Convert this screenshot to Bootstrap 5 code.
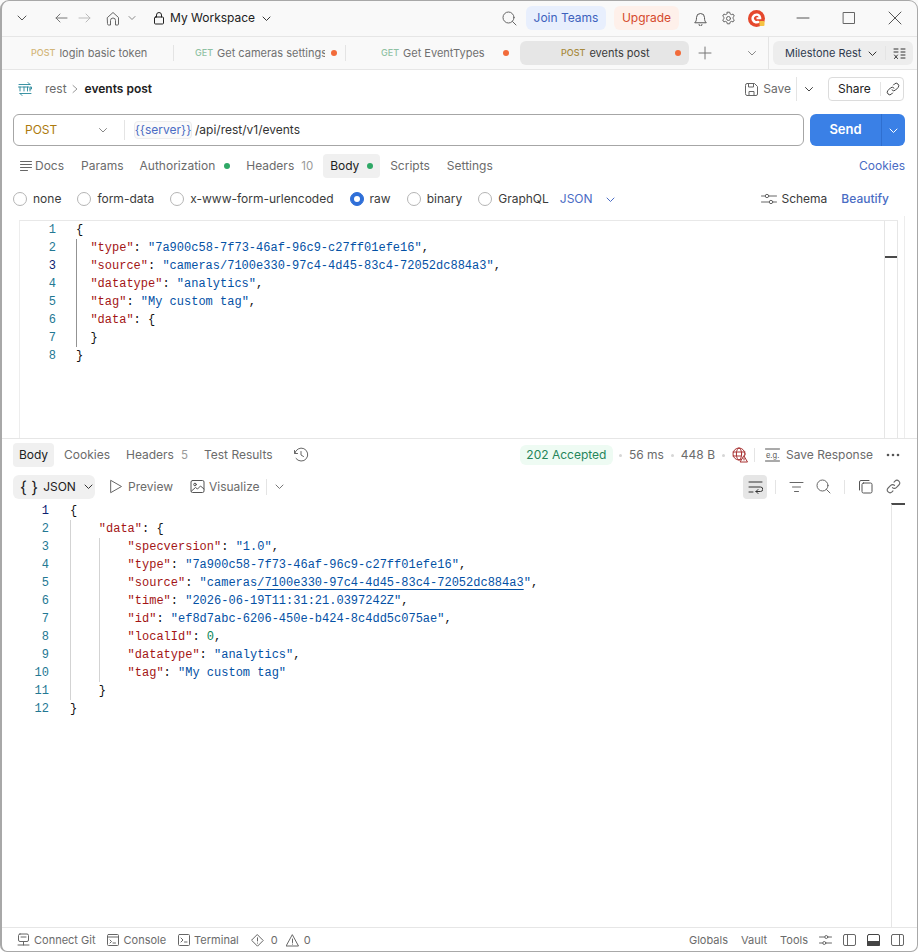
<!DOCTYPE html>
<html lang="en">
<head>
  <meta charset="UTF-8" />
  <meta name="viewport" content="width=device-width, initial-scale=1" />
  <title>events post</title>
  <link href="https://cdn.jsdelivr.net/npm/bootstrap@5.3.3/dist/css/bootstrap.min.css" rel="stylesheet" />
  <style>
    html, body { margin: 0; background: #fff; }
    body { font-family: Inter, "Liberation Sans", sans-serif; font-size: 12px; color: #6b6b6b; line-height: 16px; }
    svg { flex: none; display: block; fill: none; stroke: currentColor; stroke-width: 1; stroke-linecap: round; stroke-linejoin: round; }
    .app { position: relative; width: 918px; height: 952px; overflow: hidden; display: flex; flex-direction: column; background: #fff; }
    .app::after { content: ""; position: absolute; inset: 0; border: 1px solid #a8a8a8; border-left-width: 2px; border-radius: 9px 9px 7px 7px; pointer-events: none; }

    .titlebar { height: 37px; flex: none; background: #f9f9f9; border-bottom: 1px solid #e6e6e6; padding-left: 15px; padding-right: 16px; }
    .wsname { color: #212121; font-size: 12px; }
    .pill-join, .pill-up { height: 24px; border-radius: 6px; display: flex; align-items: center; justify-content: center; font-size: 12px; }
    .pill-join { width: 80px; background: #e8effd; color: #3d62bd; }
    .pill-up { width: 65px; background: #fef0ea; color: #d5492c; }

    .tabbar { height: 33px; flex: none; background: #f9f9f9; border-bottom: 1px solid #e6e6e6; }
    .rtab { height: 24px; display: flex; align-items: center; color: #707070; font-size: 11px; white-space: nowrap; position: relative; }
    .rtab b { font-weight: 500; font-size: 9px; margin-right: 4px; }
    .m-post { color: #d3b678; }
    .m-get { color: #8fc1a3; }
    .tw1 { width: 174px; padding-left: 31px; }
    .tw2 { width: 172px; padding-left: 21px; }
    .tw3 { width: 174px; padding-left: 35px; }
    .tw4 { width: 169px; padding-left: 41px; background: #e6e6e6; border-radius: 6px; color: #3b3b3b; }
    .tw4 b { color: #a88a3c; }
    .tsep::after { content: ""; position: absolute; right: 0; top: 4px; bottom: 4px; width: 1px; background: #e4e4e4; }
    .clip-t { width: 108px; overflow: hidden; }
    .tdot { width: 6px; height: 6px; border-radius: 50%; background: #f26b3a; flex: none; }
    .envbox { width: 140px; height: 24px; background: #ededed; border-radius: 6px; color: #2f3a4d; padding-left: 12px; font-size: 11px; }
    .vsep { width: 1px; background: #e4e4e4; flex: none; }

    .crumb { height: 38px; flex: none; padding-left: 17px; padding-right: 14px; }
    .crumb-name { color: #212121; font-weight: 600; font-size: 12px; }
    .sharebtn { width: 76px; height: 24px; padding: 0 0 0 9px; border: 1px solid #dcdcdc; border-radius: 4px; color: #212121; font-size: 12px; display: flex; align-items: center; background: #fff; }

    .urlrow { height: 38px; flex: none; padding-left: 13px; padding-right: 13px; padding-top: 6px; }
    .urlbox { width: 791px; height: 32px; border: 1px solid #a6a6a6; border-radius: 6px; }
    .meth { width: 73px; color: #ad7a0d; font-size: 12px; margin-left: 11px; }
    .srv { width: 58px; height: 18px; border: 1px solid #ededed; border-radius: 4px; background: #fafafa; color: #4a6cc4; font-size: 12px; display: flex; align-items: center; justify-content: center; }
    .urltxt { color: #333; font-size: 12px; margin-left: 3px; }
    .sendgrp { width: 95px; height: 32px; margin-left: 6px; }
    .sendgrp .btn { background: #3a80e6; border: 0; color: #fff; height: 32px; padding: 0; }
    .sendmain { width: 71px; font-weight: 600; font-size: 13px; border-radius: 6px 0 0 6px !important; }
    .sendarr { width: 24px; border-left: 1px solid #2f6fd0 !important; border-radius: 0 6px 6px 0 !important; display: flex; align-items: center; justify-content: center; margin-left: 0 !important; }

    .reqtabs { height: 36px; flex: none; padding-top: 4px; padding-left: 20px; padding-right: 13px; font-size: 12px; }
    .cnt { color: #9a9a9a; font-size: 11.5px; }
    .gdot { width: 6px; height: 6px; border-radius: 50%; background: #2fa866; flex: none; }
    .body-on { width: 57px; height: 24px; background: #f0f0f0; border-radius: 4px; padding-left: 7px; color: #212121; }
    .linkc { color: #4a6cc4; }

    .bodyopts { height: 34px; flex: none; padding-left: 13px; padding-right: 29px; font-size: 12px; color: #3b3b3b; }
    .form-check-input.rad { width: 14px; height: 14px; margin-top: 0; margin-right: 6px; border: 1px solid #b5b5b5; flex: none; }
    .form-check-input.rad:checked { background-color: #2f6fd8; border-color: #2f6fd8; }

    .editorwrap { height: 222px; flex: none; width: 905px; border-right: 1px solid #ededed; padding-top: 4px; padding-left: 19px; }
    .editor { width: 879px; height: 218px; border-top: 1px solid #e8e8e8; border-left: 1px solid #ededed; }
    .miniL { width: 14px; flex: none; border-left: 1px solid #e6e6e6; border-right: 1px solid #e6e6e6; padding-top: 35px; }
    .miniL i { display: block; height: 2px; background: #4a4a4a; }
    .mono { font-family: "Liberation Mono", "DejaVu Sans Mono", monospace; font-size: 12px; line-height: 18px; color: #111; }
    .ln { height: 18px; display: flex; white-space: pre; }
    .num { text-align: right; color: #237893; flex: none; }
    .ed-n { width: 36px; margin-right: 20px; }
    .re-n { width: 49px; margin-right: 21px; }
    .num.on { color: #0b216f; }
    .gd { width: 14.4px; flex: none; border-left: 1px solid #d3d3d3; }
    .gd.act { border-left-color: #939393; }
    .gd2 { width: 28.8px; }
    .k { color: #a31515; }
    .s { color: #0451a5; }
    .n { color: #098658; }
    .lk { text-decoration: underline; text-underline-offset: 3px; }

    .paneline { height: 1px; flex: none; background: #e6e6e6; }
    .restabs { height: 32px; flex: none; padding-left: 13px; padding-right: 18px; font-size: 12px; }
    .body-r { width: 41px; height: 24px; background: #f0f0f0; border-radius: 4px; color: #212121; display: flex; align-items: center; justify-content: center; }
    .acc { width: 93px; height: 20px; background: #eefbf3; color: #25855a; border-radius: 6px; display: flex; align-items: center; justify-content: center; font-size: 12px; }
    .sdot { width: 3px; height: 3px; border-radius: 50%; background: #d6d6d6; flex: none; }
    .restools { height: 31px; flex: none; padding-left: 13px; padding-right: 17px; font-size: 12px; }
    .jsonbox { width: 82px; height: 24px; background: #f0f0f0; border-radius: 6px; color: #212121; padding-left: 7px; }
    .wrapbtn { width: 24px; height: 24px; background: #e6e6e6; border-radius: 4px; display: flex; align-items: center; justify-content: center; color: #333; }
    .rescode { flex: 1 1 auto; min-height: 0; }
    .miniR { width: 14px; flex: none; margin-left: auto; margin-right: 13px; border-left: 1px solid #e6e6e6; border-top: 2px solid #4a4a4a; margin-top: 1px; }

    .statusbar { height: 25px; flex: none; border-top: 1px solid #e6e6e6; padding-left: 17px; padding-right: 14px; font-size: 11px; }
    .sm1 { margin-left: 1px; } .sm2 { margin-left: 2px; } .sm3 { margin-left: 3px; } .sm4 { margin-left: 4px; } .sm5 { margin-left: 5px; } .sm6 { margin-left: 6px; }
    .sm7 { margin-left: 7px; } .sm8 { margin-left: 8px; } .sm9 { margin-left: 9px; } .sm10 { margin-left: 10px; } .sm11 { margin-left: 11px; } .sm12 { margin-left: 12px; }
    .sm13 { margin-left: 13px; } .sm14 { margin-left: 14px; } .sm15 { margin-left: 15px; } .sm16 { margin-left: 16px; } .sm17 { margin-left: 17px; } .sm18 { margin-left: 18px; } .sm20 { margin-left: 20px; } .sm25 { margin-left: 25px; } .sm26 { margin-left: 26px; } .sm31 { margin-left: 31px; } .sm32 { margin-left: 32px; } .sm35 { margin-left: 35px; }
    .h14 { height: 14px; }
    .h16 { height: 16px; }
    .h20 { height: 20px; }
    .h24 { height: 24px; }
    .logo { stroke: none; }
  </style>
</head>
<body>
<div class="app">

  <!-- title bar -->
  <div class="titlebar d-flex align-items-center">
    <svg class="sm1" width="12" height="12" viewBox="0 0 12 12" color="#555"><path d="M2 4l4 4 4-4"/></svg>
    <svg class="sm26" width="14" height="14" viewBox="0 0 14 14" color="#777"><path d="M13 7H2M6 3L2 7l4 4"/></svg>
    <svg class="sm10" width="14" height="14" viewBox="0 0 14 14" color="#bbb"><path d="M1 7h11M8 3l4 4-4 4"/></svg>
    <svg class="sm14" width="14" height="15" viewBox="0 0 14 15" color="#666"><path d="M1.500 6.500L7 1.500l5.500 5V13a1 1 0 0 1-1 1H9.500V9.500a2.500 2.500 0 0 0-5 0V14H2.500a1 1 0 0 1-1-1z"/></svg>
    <svg class="sm8" width="8" height="8" viewBox="0 0 8 8" color="#888"><path d="M1 2.500l3 3 3-3"/></svg>
    <svg class="sm17" width="12" height="14" viewBox="0 0 12 14" color="#222"><rect x="1.500" y="6" width="9" height="7" rx="1"/><path d="M3.500 6V4a2.500 2.500 0 0 1 5 0v2"/></svg>
    <span class="wsname sm5">My Workspace</span>
    <svg class="sm7" width="9" height="9" viewBox="0 0 9 9" color="#333"><path d="M1 3l3.500 3.500L8 3"/></svg>
    <svg class="ms-auto" width="15" height="15" viewBox="0 0 15 15" color="#666"><circle cx="6.500" cy="6.500" r="5.500"/><path d="M10.500 10.500L14 14"/></svg>
    <div class="pill-join sm9">Join Teams</div>
    <div class="pill-up sm8">Upgrade</div>
    <svg class="sm14" width="15" height="15" viewBox="0 0 15 15" color="#555"><path d="M2 11.500c1-1 1.500-2 1.500-5a4 4 0 0 1 8 0c0 3 .5 4 1.500 5zM6 13.500a1.500 1.500 0 0 0 3 0"/></svg>
    <svg class="sm13" width="15" height="15" viewBox="0 0 15 15" color="#666"><path d="M6.300 1.200h2.400l.4 1.700 1.300.7 1.700-.5 1.200 2-1.300 1.200v1.400l1.300 1.200-1.200 2-1.700-.5-1.300.7-.4 1.700H6.300l-.4-1.700-1.300-.7-1.700.5-1.200-2 1.300-1.200V6.300L1.700 5.100l1.200-2 1.700.5 1.300-.7z"/><circle cx="7.500" cy="7.500" r="2"/></svg>
    <svg class="logo sm12" width="17" height="17" viewBox="0 0 17 17"><circle cx="8.500" cy="8.500" r="8.500" fill="#e5482d"/><path d="M8.500 3.500a5 5 0 1 0 3.500 8.500l-2-1.500a2.500 2.500 0 1 1 .7-3.300h-2.200v2h4.800c.4-3.400-1.800-5.700-4.800-5.700z" fill="#fff"/><rect x="11.500" y="11" width="5" height="5" rx="1" fill="#f6c343"/></svg>
    <svg class="sm31" width="14" height="14" viewBox="0 0 14 14" color="#555"><path d="M1 7h12"/></svg>
    <svg class="sm32" width="14" height="14" viewBox="0 0 14 14" color="#666" stroke-width="1.500"><rect x="1.500" y="1.500" width="11" height="11"/></svg>
    <svg class="sm32" width="14" height="14" viewBox="0 0 14 14" color="#555"><path d="M1 1l12 12M13 1L1 13"/></svg>
  </div>

  <!-- open requests -->
  <div class="tabbar d-flex align-items-center">
    <div class="rtab tw1 tsep"><b class="m-post">POST</b>login basic token</div>
    <div class="rtab tw2 tsep"><b class="m-get">GET</b><span class="clip-t">Get cameras settings</span><span class="tdot sm6"></span></div>
    <div class="rtab tw3"><b class="m-get">GET</b>Get EventTypes<span class="tdot sm18"></span></div>
    <div class="rtab tw4"><b>POST</b>events post<span class="tdot sm25"></span></div>
    <svg class="sm9" width="14" height="14" viewBox="0 0 14 14" color="#777"><path d="M7 1v12M1 7h12"/></svg>
    <svg class="sm35" width="10" height="10" viewBox="0 0 10 10" color="#888"><path d="M1.500 3.500L5 7l3.500-3.500"/></svg>
    <div class="vsep sm11 align-self-stretch"></div>
    <div class="envbox sm4 d-flex align-items-center">
      <span>Milestone Rest</span>
      <svg class="sm7" width="9" height="9" viewBox="0 0 9 9" color="#333"><path d="M1 3l3.500 3.500L8 3"/></svg>
      <div class="vsep sm8 h14"></div>
      <svg class="sm7" width="13" height="13" viewBox="0 0 13 13" color="#333"><path d="M1 2h4M1 5h4M8 2h4M8 5h4M8 8h4M8 11h4M1.500 8l3 3.500M4.500 8l-3 3.500"/></svg>
    </div>
  </div>

  <!-- breadcrumb -->
  <div class="crumb d-flex align-items-center">
    <svg width="16" height="16" viewBox="0 0 16 16" color="#26879a"><path d="M2 3.500h11M11 1.500l2 2M14 12.500H3M5 14.500l-2-2M1.500 6h3M3 6v4M5.500 6h3M7 6v4M9 6h3M10.500 6v4M13 10V6h1.500v2H13" stroke-width=".9"/></svg>
    <span class="sm12">rest</span>
    <svg class="sm4" width="8" height="10" viewBox="0 0 8 10" color="#999"><path d="M2 1.500L6 5 2 8.500"/></svg>
    <span class="crumb-name sm6">events post</span>
    <svg class="ms-auto" width="15" height="15" viewBox="0 0 15 15" color="#666"><path d="M1.500 3a1.500 1.500 0 0 1 1.500-1.500h7.500l3 3V12a1.500 1.500 0 0 1-1.500 1.500H3A1.500 1.500 0 0 1 1.500 12zM4.500 1.500V5h5V1.500M5 13.500V9.500h5v4"/></svg>
    <span class="sm4">Save</span>
    <div class="vsep sm5 h24"></div>
    <svg class="sm7" width="10" height="10" viewBox="0 0 10 10" color="#444"><path d="M1.500 3.500L5 7l3.500-3.500"/></svg>
    <button class="sharebtn sm14">Share
      <span class="vsep sm9 h14"></span>
      <svg class="sm5" width="14" height="14" viewBox="0 0 14 14" color="#444"><path d="M6 8a2.500 2.500 0 0 0 3.600 0l2.400-2.400A2.500 2.500 0 0 0 8.400 2L7.500 3M8 6a2.500 2.500 0 0 0-3.600 0L2 8.400A2.500 2.500 0 0 0 5.600 12l.9-1"/></svg>
    </button>
  </div>

  <!-- url -->
  <div class="urlrow d-flex">
    <div class="urlbox d-flex align-items-center">
      <span class="meth">POST</span>
      <svg width="10" height="10" viewBox="0 0 10 10" color="#888"><path d="M1.500 3.500L5 7l3.500-3.500"/></svg>
      <div class="vsep sm16 h20"></div>
      <div class="srv sm9">{{server}}</div>
      <span class="urltxt">/api/rest/v1/events</span>
    </div>
    <div class="btn-group sendgrp">
      <button class="btn sendmain">Send</button>
      <button class="btn sendarr"><svg width="9" height="9" viewBox="0 0 9 9" color="#fff"><path d="M1 3l3.500 3.500L8 3"/></svg></button>
    </div>
  </div>

  <!-- request tabs -->
  <div class="reqtabs d-flex align-items-center">
    <svg width="14" height="12" viewBox="0 0 14 12" color="#666"><path d="M0.500 1.500h11M0.500 4.500h11M0.500 7.500h11M0.500 10.500h7"/></svg>
    <span class="sm1">Docs</span>
    <span class="sm17">Params</span>
    <span class="sm16">Authorization</span>
    <span class="gdot sm9"></span>
    <span class="sm16">Headers</span>
    <span class="cnt sm7">10</span>
    <div class="body-on sm10 d-flex align-items-center"><span>Body</span><span class="gdot sm8"></span></div>
    <span class="sm10">Scripts</span>
    <span class="sm17">Settings</span>
    <span class="linkc ms-auto">Cookies</span>
  </div>

  <!-- body type -->
  <div class="bodyopts d-flex align-items-center">
    <input class="form-check-input rad" type="radio" name="bt"><span>none</span>
    <input class="form-check-input rad sm16" type="radio" name="bt"><span>form-data</span>
    <input class="form-check-input rad sm16" type="radio" name="bt"><span>x-www-form-urlencoded</span>
    <input class="form-check-input rad sm16" type="radio" name="bt" checked><span>raw</span>
    <input class="form-check-input rad sm16" type="radio" name="bt"><span>binary</span>
    <input class="form-check-input rad sm16" type="radio" name="bt"><span>GraphQL</span>
    <span class="linkc sm11">JSON</span>
    <svg class="sm13" width="9" height="9" viewBox="0 0 9 9" color="#4a6cc4"><path d="M1 3l3.500 3.500L8 3"/></svg>
    <svg class="ms-auto" width="16" height="14" viewBox="0 0 16 14" color="#666"><path d="M0.500 4h4M8 4h7.500M0.500 10h7.500M11.500 10h4"/><circle cx="6" cy="4" r="1.700"/><circle cx="10" cy="10" r="1.700"/></svg>
    <span class="sm4">Schema</span>
    <span class="linkc sm14 fw-medium">Beautify</span>
  </div>

  <!-- request editor -->
  <div class="editorwrap">
    <div class="editor d-flex">
      <div class="mono flex-fill">
        <div class="ln"><span class="num ed-n">1</span><span>{</span></div>
        <div class="ln"><span class="num ed-n">2</span><span class="gd act"></span><span><span class="k">"type"</span>: <span class="s">"7a900c58-7f73-46af-96c9-c27ff01efe16"</span>,</span></div>
        <div class="ln"><span class="num on ed-n">3</span><span class="gd act"></span><span><span class="k">"source"</span>: <span class="s">"cameras/7100e330-97c4-4d45-83c4-72052dc884a3"</span>,</span></div>
        <div class="ln"><span class="num ed-n">4</span><span class="gd act"></span><span><span class="k">"datatype"</span>: <span class="s">"analytics"</span>,</span></div>
        <div class="ln"><span class="num ed-n">5</span><span class="gd act"></span><span><span class="k">"tag"</span>: <span class="s">"My custom tag"</span>,</span></div>
        <div class="ln"><span class="num ed-n">6</span><span class="gd act"></span><span><span class="k">"data"</span>: {</span></div>
        <div class="ln"><span class="num ed-n">7</span><span class="gd act"></span><span>}</span></div>
        <div class="ln"><span class="num ed-n">8</span><span>}</span></div>
      </div>
      <div class="miniL"><i></i></div>
    </div>
  </div>
  <div class="paneline"></div>

  <!-- response tabs -->
  <div class="restabs d-flex align-items-center">
    <div class="body-r">Body</div>
    <span class="sm10">Cookies</span>
    <span class="sm16">Headers</span>
    <span class="cnt sm7">5</span>
    <span class="sm16">Test Results</span>
    <svg class="sm20" width="16" height="16" viewBox="0 0 16 16" color="#666"><path d="M1.500 3.500v3h3M1.800 6.500A6.500 6.500 0 1 1 3 11.500M8 4.500V8l2.500 1.500"/></svg>
    <div class="acc ms-auto">202 Accepted</div>
    <span class="sdot sm6"></span>
    <span class="sm7">56 ms</span>
    <span class="sdot sm7"></span>
    <span class="sm7">448 B</span>
    <span class="sdot sm7"></span>
    <svg class="sm7" width="16" height="16" viewBox="0 0 16 16" color="#a83232"><circle cx="7" cy="7" r="6"/><ellipse cx="7" cy="7" rx="2.600" ry="6"/><path d="M1 5h12M1 9h8"/><path d="M12 9l3.500 6h-7z" fill="#fff"/><path d="M12 11v2"/></svg>
    <div class="vsep sm6 h14"></div>
    <svg class="sm10" width="15" height="14" viewBox="0 0 15 14" color="#555"><path d="M0.500 1h14M0.500 13h14"/><text x="1" y="10" font-size="7.500" fill="#555" stroke="none" font-family="Inter">e.g.</text></svg>
    <span class="sm6">Save Response</span>
    <svg class="sm13" width="14" height="4" viewBox="0 0 14 4"><circle cx="2" cy="2" r="1.300" fill="#555" stroke="none"/><circle cx="7" cy="2" r="1.300" fill="#555" stroke="none"/><circle cx="12" cy="2" r="1.300" fill="#555" stroke="none"/></svg>
  </div>

  <!-- response toolbar -->
  <div class="restools d-flex align-items-center">
    <div class="jsonbox d-flex align-items-center">
      <span class="fs-6 lh-1">{ }</span>
      <span class="sm5">JSON</span>
      <svg class="sm8" width="9" height="9" viewBox="0 0 9 9" color="#333"><path d="M1 3l3.500 3.500L8 3"/></svg>
    </div>
    <svg class="sm14" width="14" height="15" viewBox="0 0 14 15" color="#666"><path d="M2 1.500l10.500 6-10.500 6z"/></svg>
    <span class="sm5">Preview</span>
    <svg class="sm17" width="15" height="15" viewBox="0 0 15 15" color="#555"><rect x="1" y="1.500" width="13" height="12" rx="1.500"/><circle cx="5" cy="5.500" r="1.300"/><path d="M1.500 12l4-3.500 2 1.500 3-3 3.500 3"/></svg>
    <span class="sm4">Visualize</span>
    <div class="vsep sm6 h16"></div>
    <svg class="sm8" width="9" height="9" viewBox="0 0 9 9" color="#777"><path d="M1 3l3.500 3.500L8 3"/></svg>
    <div class="wrapbtn ms-auto"><svg width="15" height="14" viewBox="0 0 15 14"><path d="M1 2h13M1 7h11.500a1.800 1.800 0 0 1 0 4.500H8M10 9.500l-2 2 2 2M1 12h4"/></svg></div>
    <div class="vsep sm8 h14"></div>
    <svg class="sm13" width="15" height="12" viewBox="0 0 15 12" color="#666"><path d="M1 1.500h13M3.500 6h8M5.500 10.500h4"/></svg>
    <svg class="sm12" width="15" height="15" viewBox="0 0 15 15" color="#666"><circle cx="6.500" cy="6.500" r="5.500"/><path d="M10.500 10.500L14 14"/></svg>
    <div class="vsep sm13 h14"></div>
    <svg class="sm13" width="15" height="15" viewBox="0 0 15 15" color="#555"><rect x="4" y="4" width="10" height="10" rx="1.500"/><path d="M11 1.500H3A1.500 1.500 0 0 0 1.500 3v8"/></svg>
    <svg class="sm13" width="15" height="15" viewBox="0 0 14 14" color="#666"><path d="M6 8a2.500 2.500 0 0 0 3.600 0l2.400-2.400A2.500 2.500 0 0 0 8.400 2L7.500 3M8 6a2.500 2.500 0 0 0-3.600 0L2 8.400A2.500 2.500 0 0 0 5.600 12l.9-1"/></svg>
  </div>

  <!-- response code -->
  <div class="rescode d-flex">
    <div class="mono">
      <div class="ln"><span class="num on re-n">1</span><span>{</span></div>
      <div class="ln"><span class="num re-n">2</span><span class="gd gd2"></span><span><span class="k">"data"</span>: {</span></div>
      <div class="ln"><span class="num re-n">3</span><span class="gd gd2"></span><span class="gd gd2"></span><span><span class="k">"specversion"</span>: <span class="s">"1.0"</span>,</span></div>
      <div class="ln"><span class="num re-n">4</span><span class="gd gd2"></span><span class="gd gd2"></span><span><span class="k">"type"</span>: <span class="s">"7a900c58-7f73-46af-96c9-c27ff01efe16"</span>,</span></div>
      <div class="ln"><span class="num re-n">5</span><span class="gd gd2"></span><span class="gd gd2"></span><span><span class="k">"source"</span>: <span class="s">"cameras<span class="lk">/7100e330-97c4-4d45-83c4-72052dc884a3</span>"</span>,</span></div>
      <div class="ln"><span class="num re-n">6</span><span class="gd gd2"></span><span class="gd gd2"></span><span><span class="k">"time"</span>: <span class="s">"2026-06-19T11:31:21.0397242Z"</span>,</span></div>
      <div class="ln"><span class="num re-n">7</span><span class="gd gd2"></span><span class="gd gd2"></span><span><span class="k">"id"</span>: <span class="s">"ef8d7abc-6206-450e-b424-8c4dd5c075ae"</span>,</span></div>
      <div class="ln"><span class="num re-n">8</span><span class="gd gd2"></span><span class="gd gd2"></span><span><span class="k">"localId"</span>: <span class="n">0</span>,</span></div>
      <div class="ln"><span class="num re-n">9</span><span class="gd gd2"></span><span class="gd gd2"></span><span><span class="k">"datatype"</span>: <span class="s">"analytics"</span>,</span></div>
      <div class="ln"><span class="num re-n">10</span><span class="gd gd2"></span><span class="gd gd2"></span><span><span class="k">"tag"</span>: <span class="s">"My custom tag"</span></span></div>
      <div class="ln"><span class="num re-n">11</span><span class="gd gd2"></span><span>}</span></div>
      <div class="ln"><span class="num re-n">12</span><span>}</span></div>
    </div>
    <div class="miniR"></div>
  </div>

  <!-- status bar -->
  <div class="statusbar d-flex align-items-center">
    <svg width="13" height="14" viewBox="0 0 13 14" color="#666"><rect x="1.500" y="1" width="10" height="7.500" rx="1.500"/><path d="M6.500 8.500V12M1 12h11M4 4h5"/></svg>
    <span class="sm4">Connect Git</span>
    <svg class="sm11" width="12" height="12" viewBox="0 0 12 12" color="#666"><rect x=".5" y=".5" width="11" height="11" rx="1"/><path d="M.5 3h11M3 6l1.500 1.500L3 9M6 9h2.500"/></svg>
    <span class="sm5">Console</span>
    <svg class="sm12" width="12" height="12" viewBox="0 0 12 12" color="#666"><rect x=".5" y=".5" width="11" height="11" rx="1"/><path d="M3 4l2 2-2 2M6.500 8h2.500"/></svg>
    <span class="sm4">Terminal</span>
    <svg class="sm12" width="13" height="13" viewBox="0 0 13 13" color="#666"><path d="M6.500 .8l5.700 5.700-5.700 5.700L.8 6.500zM6.500 3.800v3.200M6.500 9v.2"/></svg>
    <span class="sm7">0</span>
    <svg class="sm8" width="13" height="13" viewBox="0 0 13 13" color="#666"><path d="M6.500 1L12.500 12H.5zM6.500 5v3.500M6.500 10v.2"/></svg>
    <span class="sm5">0</span>
    <span class="ms-auto">Globals</span>
    <span class="sm13">Vault</span>
    <span class="sm13">Tools</span>
    <svg class="sm11" width="13" height="12" viewBox="0 0 13 12" color="#666"><path d="M.5 3h5M9 3h3.500M.5 9h3M7 9h5.500"/><circle cx="7.300" cy="3" r="1.500"/><circle cx="5.300" cy="9" r="1.500"/></svg>
    <svg class="sm11" width="13" height="12" viewBox="0 0 13 12" color="#666"><rect x=".5" y=".5" width="12" height="11" rx="1.500"/><path d="M4.500 .5v11"/></svg>
    <svg class="sm11" width="13" height="12" viewBox="0 0 13 12" color="#444"><rect x=".5" y=".5" width="12" height="11" rx="1.500"/><rect x=".5" y="7.500" width="12" height="4" fill="#444"/></svg>
    <svg class="sm11" width="13" height="12" viewBox="0 0 13 12" color="#666"><rect x=".5" y=".5" width="12" height="11" rx="1.500"/><path d="M8.500 .5v11"/></svg>
  </div>
</div>
<script src="https://cdn.jsdelivr.net/npm/bootstrap@5.3.3/dist/js/bootstrap.bundle.min.js"></script>
</body>
</html>
